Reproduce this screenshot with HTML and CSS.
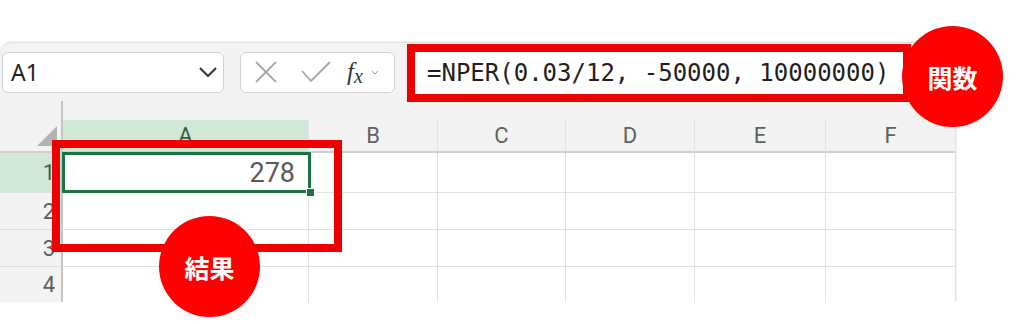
FILE: index.html
```html
<!DOCTYPE html>
<html lang="ja">
<head>
    <meta charset="UTF-8">
    <meta name="viewport" content="width=device-width, initial-scale=1.0">
    <title>NPER</title>
    <link rel="stylesheet" href="styles.css">
</head>
<body>
    <div class="window">
        <div class="formula-row">
            <div class="name-box">
                <span>A1</span>
                <svg class="chev" width="18" height="10" viewBox="0 0 18 10"><path d="M1 1l8 8 8-8" fill="none" stroke="#333" stroke-width="2"/></svg>
            </div>
            <div class="fx-buttons">
                <svg width="22" height="22" viewBox="0 0 22 22"><path d="M1 1l20 20M21 1L1 21" stroke="#a6a6a6" stroke-width="1.8"/></svg>
                <svg width="30" height="22" viewBox="0 0 30 22"><path d="M1 10l9 10L29 1" fill="none" stroke="#a6a6a6" stroke-width="1.8"/></svg>
                <span class="fx"><i>f</i><sub>x</sub></span>
                <svg width="8" height="5" viewBox="0 0 8 5"><path d="M1 1l3 3 3-3" fill="none" stroke="#9a9a9a" stroke-width="1"/></svg>
            </div>
            <div class="formula-box">
                <span class="formula">=NPER(0.03/12, -50000, 10000000)</span>
            </div>
        </div>

        <div class="grid">
            <div class="corner">
                <svg width="20" height="20" viewBox="0 0 20 20"><polygon points="20,0 20,20 0,20" fill="#b3b3b3"/></svg>
            </div>
            <div class="head-gap"></div>
            <div class="col-head sel">A</div>
            <div class="col-head">B</div>
            <div class="col-head">C</div>
            <div class="col-head">D</div>
            <div class="col-head">E</div>
            <div class="col-head">F</div>

            <div class="row-head sel">1</div>
            <div class="cell num">278</div>
            <div class="cell"></div><div class="cell"></div><div class="cell"></div><div class="cell"></div><div class="cell"></div>

            <div class="row-head">2</div>
            <div class="cell"></div><div class="cell"></div><div class="cell"></div><div class="cell"></div><div class="cell"></div><div class="cell"></div>

            <div class="row-head">3</div>
            <div class="cell"></div><div class="cell"></div><div class="cell"></div><div class="cell"></div><div class="cell"></div><div class="cell"></div>

            <div class="row-head last">4</div>
            <div class="cell last"></div><div class="cell last"></div><div class="cell last"></div><div class="cell last"></div><div class="cell last"></div><div class="cell last"></div>
        </div>

        <!-- annotations over the sheet -->
        <div class="selection"><span class="handle"></span></div>
        <div class="mark mark-result"></div>
        <div class="badge badge-fn">関数</div>
        <div class="badge badge-result">結果</div>
    </div>
</body>
</html>
```

FILE: styles.css
```css
:root {
    --panel: #f3f3f3;
    --line: #e1e1e1;
    --green: #1b7343;
    --green-soft: #cfe8d8;
    --red: #ee0000;
}

* {
    margin: 0;
    padding: 0;
    box-sizing: border-box;
}

body {
    background: #fff;
    width: 1024px;
    height: 324px;
    overflow: hidden;
    font-family: Roboto, 'Noto Sans', sans-serif;
}

.window {
    position: relative;
    width: 956px;
    margin-top: 43px;
    background: var(--panel);
    border-top-left-radius: 12px;
    box-shadow: 0 -1px 2px rgba(0, 0, 0, 0.18);
}

.formula-row {
    height: 58px;
    display: flex;
    align-items: center;
    gap: 16px;
    padding-left: 2px;
}

.name-box {
    width: 222px;
    height: 41px;
    background: #fff;
    border: 1px solid #d2d2d2;
    border-radius: 6px;
    display: flex;
    align-items: center;
    justify-content: space-between;
    padding: 0 6px 0 8px;
    font-family: 'Noto Sans', sans-serif;
    font-size: 23px;
    color: #222;
}

.fx-buttons {
    width: 155px;
    height: 41px;
    background: #fff;
    border: 1px solid #d2d2d2;
    border-radius: 6px;
    display: flex;
    align-items: center;
    padding-left: 14px;
}

.fx-buttons svg:nth-child(2) {
    margin-left: 24px;
}

.fx {
    margin-left: 16px;
    font-family: 'Liberation Serif', serif;
    font-size: 25px;
    color: #333;
    line-height: 1;
}

.fx sub {
    font-size: 20px;
    vertical-align: -3px;
    font-style: italic;
}

.fx-buttons svg:last-child {
    margin-left: 8px;
}

.formula-box {
    width: 504px;
    height: 58px;
    margin-left: -4px;
    margin-top: 2px;
    background: #fff;
    border: 8px solid var(--red);
    display: flex;
    align-items: center;
    padding-left: 12px;
}

.formula {
    font-family: 'DejaVu Sans Mono', 'Liberation Mono', monospace;
    font-size: 24px;
    color: #1f1f1f;
    white-space: nowrap;
}

.grid {
    display: grid;
    grid-template-columns: 63px 246px 129px 128px 129px 131px 130px;
    grid-template-rows: 19px 33px 40px 37px 37px 35px;
}

.corner {
    grid-row: 1 / 3;
    border-right: 2px solid #c4c4c4;
    border-bottom: 2px solid #d0d0d0;
    display: flex;
    align-items: flex-end;
    justify-content: flex-end;
    padding: 0 4px 5px 0;
}

.head-gap {
    grid-column: 2 / 8;
}

.col-head {
    display: flex;
    align-items: center;
    justify-content: center;
    font-size: 22px;
    color: #616161;
    border-right: 1px solid #e2e2e2;
    border-bottom: 2px solid #d0d0d0;
}

.col-head.sel {
    background: var(--green-soft);
    color: #2f5f43;
}

.row-head {
    display: flex;
    align-items: center;
    justify-content: flex-end;
    padding-right: 6px;
    font-size: 22px;
    color: #5c5c5c;
    border-right: 2px solid #c4c4c4;
    border-bottom: 1px solid #dedede;
}

.row-head.sel {
    background: var(--green-soft);
    color: #2f6b47;
}

.cell {
    background: #fff;
    border-right: 1px solid var(--line);
    border-bottom: 1px solid var(--line);
}

.row-head.last,
.cell.last {
    border-bottom: none;
}

.cell.num {
    display: flex;
    align-items: center;
    justify-content: flex-end;
    padding-right: 13px;
    font-size: 27px;
    color: #5a5a5a;
}

.selection {
    position: absolute;
    left: 62px;
    top: 109px;
    width: 249px;
    height: 41px;
    border: 3px solid var(--green);
}

.handle {
    position: absolute;
    right: -7px;
    bottom: -7px;
    width: 9px;
    height: 9px;
    background: var(--green);
    border: 1px solid #fff;
}

.mark-result {
    position: absolute;
    left: 52px;
    top: 97px;
    width: 290px;
    height: 112px;
    border: 8px solid var(--red);
}

.badge {
    position: absolute;
    width: 101px;
    height: 101px;
    border-radius: 50%;
    background: #ff0000;
    color: #fff;
    display: flex;
    align-items: center;
    justify-content: center;
    font-family: 'Noto Sans CJK JP', sans-serif;
    font-weight: 700;
    font-size: 25px;
}

.badge-fn {
    left: 902px;
    top: -17px;
}

.badge-result {
    left: 159px;
    top: 173px;
}
```
